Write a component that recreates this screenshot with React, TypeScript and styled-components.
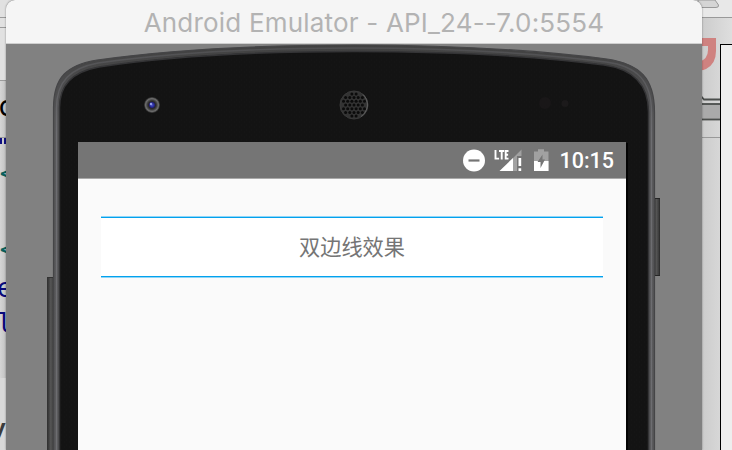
import React from 'react';
import styled, { createGlobalStyle } from 'styled-components';

const GlobalStyle = createGlobalStyle`
  * { box-sizing: border-box; }
  body { margin: 0; overflow: hidden; }
`;

const Desktop = styled.div`
  position: relative;
  width: 732px;
  height: 450px;
  overflow: hidden;
  background: #dedede;
`;

const Layer = styled.svg`
  position: absolute;
  inset: 0;
  display: block;
`;

const CodeGlyph = styled.span<{ $x: number; $y: number; $color: string; $sans?: boolean; $size?: number; $bold?: boolean }>`
  position: absolute;
  left: ${p => p.$x}px;
  top: ${p => p.$y}px;
  color: ${p => p.$color};
  font: ${p => (p.$bold ? 700 : 400)} ${p => p.$size ?? 26}px/30px ${p => (p.$sans ? '"Open Sans", sans-serif' : '"DejaVu Sans Mono", monospace')};
`;

const EmulatorWindow = styled.main`
  position: relative;
  width: 696px;
  height: 450px;
  margin-left: 6px;
  display: flex;
  flex-direction: column;
  border-radius: 9px 9px 0 0;
  overflow: hidden;
  background: #818181;
  box-shadow: 0 0 2px rgba(0, 0, 0, 0.45);
`;

const TitleBar = styled.header`
  flex: none;
  height: 44px;
  display: flex;
  justify-content: center;
  background: #f5f5f5;
  border-bottom: 1px solid #cfcfcf;
  padding: 7px 0 0 40px;
`;

const Title = styled.h1`
  margin: 0;
  font: 400 26px/32px Inter, sans-serif;
  letter-spacing: 0.19px;
  color: #b3b3b3;
  white-space: nowrap;
`;

const Device = styled.section`
  position: relative;
  flex: 1;
  padding: 98px 76px 0 72px;
`;

const Shell = styled.svg`
  position: absolute;
  left: 0;
  top: 0;
  display: block;
`;

const Screen = styled.div`
  position: relative;
  height: 308px;
  background: #fafafa;
  box-shadow: 2px 1px 0 #030303;
`;

const StatusBar = styled.div`
  height: 37px;
  display: flex;
  justify-content: flex-end;
  align-items: center;
  padding-right: 12px;
  background: #757575;
  border-bottom: 1px solid #a9a9a9;
`;

const StatusIcons = styled.svg`
  display: block;
  margin-right: 9px;
`;

const Clock = styled.time`
  font: 500 21.5px/36px Roboto, sans-serif;
  color: #fff;
  padding-top: 2px;
`;

const Content = styled.div`
  padding: 37px 23px 0;
`;

const BorderedLabel = styled.div`
  height: 62px;
  display: flex;
  align-items: center;
  justify-content: center;
  padding-bottom: 2px;
  background: #fff;
  color: #757575;
  font: 400 21.2px/30px "Noto Sans CJK SC", sans-serif;
  box-shadow: inset 0 1px #8fd6f8, inset 0 2px #03a1ed, inset 0 -1px #8fd6f8, inset 0 -2px #03a1ed;
`;

const grillePoints: Array<[number, number]> = [];
for (let row = -3; row <= 3; row++) {
  for (let col = -4; col <= 4; col++) {
    const x = col * 4.2 + (row % 2 ? 2.1 : 0);
    const y = row * 3.7;
    if (Math.hypot(x, y) < 12.5) grillePoints.push([348 + x, 61 + y]);
  }
}

function Backdrop() {
  return (
    <>
      <Layer width="732" height="450" viewBox="0 0 732 450">
        <defs>
          <linearGradient id="leftPane" x1="0" x2="1">
            <stop offset="0" stopColor="#d5d5d5" />
            <stop offset="1" stopColor="#bcbcbc" />
          </linearGradient>
          <linearGradient id="rightPane" x1="0" x2="1">
            <stop offset="0" stopColor="#cbcbcb" />
            <stop offset="1" stopColor="#dedede" />
          </linearGradient>
        </defs>
        <rect width="8" height="80" fill="#e1e1e1" />
        <rect y="80" width="8" height="298" fill="url(#leftPane)" />
        <path d="M0 17.5h8M0 27.5h8M0 80.5h8M0 137.5h8" stroke="#9b9b9b" />
        <rect y="378" width="8" height="72" fill="#d9d9d9" />
        <rect x="0" y="138" width="2" height="6" fill="#101080" />
        <rect x="4" y="138" width="2" height="6" fill="#101080" />
        <rect x="700" width="32" height="450" fill="url(#rightPane)" />
        <rect x="700" width="32" height="17" fill="#e8e8e8" />
        <path d="M698 0H715L718.5 5Q719 7.5 716 7.5H698z" fill="#d5d5d5" stroke="#999" />
        <path d="M700 17.5h32M700 137.5h20" stroke="#999" />
        <path d="M700 38H716V51Q716 64 706 69Q702 71 699 70V62Q708 59 708 50V46H700z" fill="#cf8280" />
        <path d="M700 95L704 99.5H721" fill="none" stroke="#4b4e4c" strokeWidth="1.8" />
        <rect x="700" y="104" width="21" height="15.5" fill="#aaa" stroke="#4b4e4c" strokeWidth="1.8" />
        <rect x="720.5" y="44.5" width="14" height="408" fill="#eee" stroke="#000" />
      </Layer>
      <CodeGlyph $x={-2.5} $y={92} $color="#000" $size={28}>c</CodeGlyph>
      <CodeGlyph $x={0} $y={158} $color="#08605b" $size={20} $bold>&lt;</CodeGlyph>
      <CodeGlyph $x={0} $y={234} $color="#08605b" $size={20} $bold>&lt;</CodeGlyph>
      <CodeGlyph $x={-3} $y={273} $color="#08087c">e</CodeGlyph>
      <CodeGlyph $x={-3} $y={308} $color="#08087c">l</CodeGlyph>
      <CodeGlyph $x={-7} $y={411} $color="#3b3b3b" $sans $bold $size={22}>y</CodeGlyph>
    </>
  );
}

function DeviceShell() {
  return (
    <Shell width="696" height="406" viewBox="0 0 696 406">
      <defs>
        <linearGradient id="sideKey" x1="0" x2="1">
          <stop offset="0" stopColor="#303030" />
          <stop offset="0.4" stopColor="#555" />
          <stop offset="0.8" stopColor="#3c3c3c" />
          <stop offset="1" stopColor="#252525" />
        </linearGradient>
        <linearGradient id="rim" x1="0" y1="0" x2="0" y2="1">
          <stop offset="0" stopColor="#414141" />
          <stop offset="0.18" stopColor="#555557" />
          <stop offset="1" stopColor="#565658" />
        </linearGradient>
        <linearGradient id="rimShine" gradientUnits="userSpaceOnUse" x1="0" y1="4" x2="0" y2="90">
          <stop offset="0" stopColor="#505052" />
          <stop offset="1" stopColor="#6d6d71" />
        </linearGradient>
        <pattern id="grain" width="5" height="5" patternUnits="userSpaceOnUse">
          <rect width="5" height="5" fill="#131313" />
          <path d="M0 1h1M3 3h1" stroke="#171717" />
        </pattern>
        <radialGradient id="lens">
          <stop offset="0" stopColor="#4c54d0" />
          <stop offset="0.3" stopColor="#23238c" />
          <stop offset="0.42" stopColor="#25232d" />
          <stop offset="0.58" stopColor="#3c3c3c" />
          <stop offset="0.8" stopColor="#6f6f6f" />
          <stop offset="1" stopColor="#262626" />
        </radialGradient>
      </defs>
      <rect x="41.5" y="233.5" width="8" height="180" fill="url(#sideKey)" stroke="#333" />
      <rect x="648" y="154" width="6" height="78" fill="url(#sideKey)" />
      <path d="M648 154.5h6M648 231.5h6" stroke="#252525" />
      <path d="M47.5 410V64C47.5 33 61 21 91 16C170 5 255 1 348 1C442 1 530 6 601 15C634 20 648.5 34 648.5 68V410" fill="url(#rim)" stroke="#454547" strokeWidth="1.2" />
      <path d="M50.5 410V64C50.5 37 65 24 92 19C170 8 255 4 348 4C442 4 530 9 600 18C631 22 645.5 37 645.5 68V410" fill="none" stroke="url(#rimShine)" strokeWidth="1.4" />
      <path d="M53.5 410V64C53.5 41 66 28 93 23C170 11 255 7.5 348 7.5C442 7.5 530 12 598 21C627 25 642.5 41 642.5 68V410" fill="url(#grain)" stroke="#343436" strokeWidth="1.5" />
      <circle cx="146" cy="61" r="8" fill="url(#lens)" />
      <circle cx="145" cy="60" r="1.2" fill="#959fe8" />
      <circle cx="348" cy="61" r="14" fill="#333" stroke="#3a3a3a" />
      {grillePoints.map(([x, y]) => <circle key={`${x}-${y}`} cx={x} cy={y} r="1.5" fill="#0b0b0b" />)}
      <path d="M357 50.5A14 14 0 0 1 355 72.5" fill="none" stroke="#626262" />
      <circle cx="539" cy="59" r="6" fill="#191718" />
      <circle cx="559" cy="59.5" r="3.5" fill="#1c1a1b" />
    </Shell>
  );
}

function AndroidStatusIcons() {
  return (
    <StatusIcons width="88" height="28" viewBox="462 146 88 28" aria-hidden="true">
      <circle cx="474" cy="160.5" r="11" fill="#fff" />
      <path d="M468.5 160.5h11" stroke="#757575" strokeWidth="2.2" />
      <path d="M521.5 149.5v6.5h-4.5v15h-17z" fill="#a1a1a1" />
      <path d="M513 158v13H499.5z" fill="#fff" />
      <path d="M518.5 158h2.7v8h-2.7zM518.5 168.3h2.7v2.7h-2.7z" fill="#fff" />
      <path d="M495.5 150v8.6h3.6M499 151h5.2M501.7 151v8.5M508.5 151h-2.8v7.6h2.8M505.7 154.8h2.4" fill="none" stroke="#fff" strokeWidth="1.9" />
      <path d="M534 151.5h4v-2.3h6v2.3h4.5v19.5H534z" fill="#a1a1a1" />
      <path d="M534 161h14.5v10H534z" fill="#fff" />
      <path d="M542.5 154.5v5h2.5l-4.5 8.5v-6h-3z" fill="#757575" />
    </StatusIcons>
  );
}

export default function App() {
  return (
    <>
      <GlobalStyle />
      <Desktop>
        <Backdrop />
        <EmulatorWindow>
          <TitleBar><Title>Android Emulator - API_24--7.0:5554</Title></TitleBar>
          <Device>
            <DeviceShell />
            <Screen>
              <StatusBar>
                <AndroidStatusIcons />
                <Clock>10:15</Clock>
              </StatusBar>
              <Content><BorderedLabel>双边线效果</BorderedLabel></Content>
            </Screen>
          </Device>
        </EmulatorWindow>
      </Desktop>
    </>
  );
}
